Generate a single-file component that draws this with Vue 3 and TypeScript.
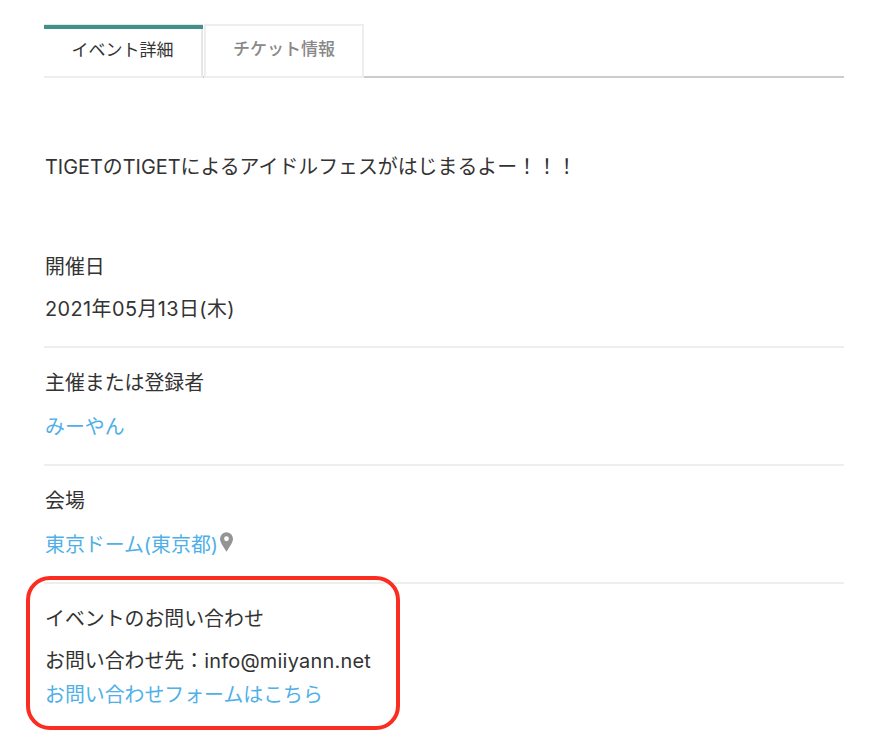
<script setup lang="ts">
interface Row { label: string; value: string; link: boolean; pin?: boolean }
const rows: Row[] = [
  { label: '開催日', value: '2021年05月13日(木)', link: false },
  { label: '主催または登録者', value: 'みーやん', link: true },
  { label: '会場', value: '東京ドーム(東京都)', link: true, pin: true },
]
</script>

<template>
  <main class="page">
    <nav class="tabs">
      <div class="tab active">イベント詳細</div>
      <div class="tab idle">チケット情報</div>
    </nav>
    <p class="lead">TIGETのTIGETによるアイドルフェスがはじまるよー！！！</p>
    <section v-for="row in rows" :key="row.label" class="row">
      <div class="label">{{ row.label }}</div>
      <div class="value" :class="{ link: row.link }">
        {{ row.value }}<svg v-if="row.pin" class="pin" viewBox="0 0 12 18" width="13" height="20"><path fill="#949494" fill-rule="evenodd" d="M6 0a6 6 0 0 0-6 6c0 3.6 3.8 8.2 6 12 2.2-3.8 6-8.4 6-12a6 6 0 0 0-6-6zm0 3.8a2.2 2.2 0 1 1 0 4.4 2.2 2.2 0 0 1 0-4.4z"/></svg>
      </div>
    </section>
    <section class="contact">
      <div class="contact-title">イベントのお問い合わせ</div>
      <div class="contact-line">お問い合わせ先：<span class="email">info@miiyann.net</span></div>
      <div class="contact-line link">お問い合わせフォームはこちら</div>
      <div class="mark"></div>
    </section>
  </main>
</template>

<style scoped>
.page {
  box-sizing: border-box;
  width: 878px;
  height: 754px;
  padding: 24px 34px 0 44px;
  overflow: hidden;
  background: #fff;
  color: #333;
  font-family: Inter, "Noto Sans CJK JP", sans-serif;
}
.tabs {
  display: flex;
  height: 54px;
  box-sizing: border-box;
  border-bottom: 2px solid #ccc;
}
.tab {
  box-sizing: border-box;
  height: 54px;
  display: flex;
  align-items: center;
  justify-content: center;
  font-size: 17px;
}
.active {
  width: 159px;
  padding: 0 2px 4px 0;
  color: #333;
  border-top: 1px solid #e6e6e6;
  box-shadow: inset 0 4px 0 #3f918e, inset -2px 0 0 #e6e6e6;
  border-bottom: 2px solid #eee;
  background: #fff;
}
.idle {
  width: 160px;
  margin-left: 1px;
  padding-bottom: 7px;
  color: #888;
  font-weight: 500;
  border: 2px solid #eee;
}
.lead {
  margin: 76px 0 0;
  padding-left: 1px;
  font-size: 19.9px;
  line-height: 26px;
  color: #333;
}
.row {
  border-bottom: 2px solid #eee;
  height: 118px;
  box-sizing: border-box;
  padding: 22px 0 0 1px;
}
.lead + .row {
  margin-top: 18px;
  height: 150px;
  padding-top: 56px;
}
.label, .contact-title {
  font-size: 19.9px;
  line-height: 26px;
}
.value {
  margin-top: 17px;
  font-size: 19.9px;
  line-height: 28px;
  display: flex;
  align-items: center;
}
.lead + .row .value {
  margin-top: 15px;
  letter-spacing: 0.43px;
}
.link { color: #4fb0e8; }
.pin { margin-left: 2px; margin-top: -7px; }
.contact {
  position: relative;
  padding: 22px 0 0 1px;
}
.contact-line {
  font-size: 19.9px;
  line-height: 26px;
}
.email { letter-spacing: 0.25px; }
.contact-title + .contact-line { margin-top: 16px; }
.contact-line + .contact-line { margin-top: 8px; }
.mark {
  position: absolute;
  left: -18px;
  top: -8px;
  width: 374px;
  height: 154px;
  box-sizing: border-box;
  border: 4px solid #fb2d20;
  border-radius: 24px;
}
</style>
